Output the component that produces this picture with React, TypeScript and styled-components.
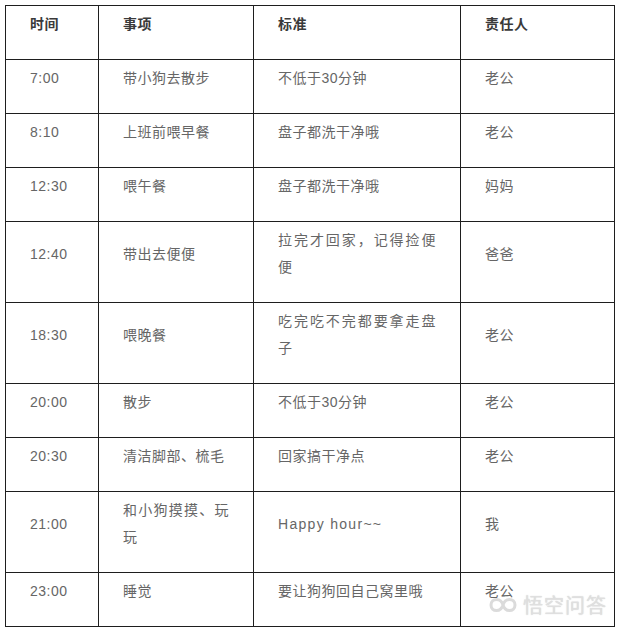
import { type FC } from 'react'
import styled, { createGlobalStyle } from 'styled-components'

interface IRow {
  time: string
  task: string
  rule: string
  owner: string
  latin?: boolean
}

const rows: IRow[] = [
  { time: '7:00', task: '带小狗去散步', rule: '不低于30分钟', owner: '老公' },
  { time: '8:10', task: '上班前喂早餐', rule: '盘子都洗干净哦', owner: '老公' },
  { time: '12:30', task: '喂午餐', rule: '盘子都洗干净哦', owner: '妈妈' },
  { time: '12:40', task: '带出去便便', rule: '拉完才回家，记得捡便便', owner: '爸爸' },
  { time: '18:30', task: '喂晚餐', rule: '吃完吃不完都要拿走盘子', owner: '老公' },
  { time: '20:00', task: '散步', rule: '不低于30分钟', owner: '老公' },
  { time: '20:30', task: '清洁脚部、梳毛', rule: '回家搞干净点', owner: '老公' },
  { time: '21:00', task: '和小狗摸摸、玩玩', rule: 'Happy hour~~', owner: '我', latin: true },
  { time: '23:00', task: '睡觉', rule: '要让狗狗回自己窝里哦', owner: '老公' },
]

const GlobalStyle = createGlobalStyle`
  html, body {
    margin: 0;
    padding: 0;
    background: #fff;
  }
`

const Page = styled.div`
  position: relative;
  width: 620px;
  height: 630px;
  padding: 5px 0 0 5px;
  box-sizing: border-box;
  font-family: 'Liberation Sans', 'Noto Sans CJK SC', sans-serif;
`

const Table = styled.table`
  border-collapse: collapse;
  table-layout: fixed;
  width: 609px;
`

const Cell = styled.td<{ $head?: boolean; $latin?: boolean }>`
  border: 1px solid #1e1e1e;
  padding: 5px 24px 21px 24px;
  line-height: 27px;
  font-size: 14px;
  letter-spacing: ${p => (p.$latin ? '1.3px' : '0.5px')};
  vertical-align: middle;
  text-align: justify;
  color: ${p => (p.$head ? '#3a3a3a' : '#666')};
  font-weight: ${p => (p.$head ? 700 : 400)};
  word-break: break-all;
`

const Watermark = styled.div`
  position: absolute;
  right: 13px;
  bottom: 11px;
  display: flex;
  align-items: center;
  gap: 6px;
  color: rgba(225, 225, 225, 0.9);
  font-size: 20px;
  letter-spacing: 1px;
  font-family: 'Noto Sans CJK SC', sans-serif;
  text-shadow: 0 0 1px rgba(170, 170, 170, 0.6);
`

const Logo: FC = () => (
  <svg width="28" height="16" viewBox="0 0 28 16" fill="none">
    <path
      d="M2 8c0-3.5 2.5-5.5 5.5-5.5S13 4.5 14 8c1 3.5 3.5 5.5 6.5 5.5S26 11.5 26 8s-2.5-5.5-5.5-5.5S15 4.5 14 8c-1 3.5-3.5 5.5-6.5 5.5S2 11.5 2 8z"
      stroke="rgba(215,215,215,0.9)"
      strokeWidth="3"
    />
  </svg>
)

const App: FC = () => (
  <Page>
    <GlobalStyle />
    <Table>
      <colgroup>
        <col style={{ width: 93 }} />
        <col style={{ width: 155 }} />
        <col style={{ width: 207 }} />
        <col style={{ width: 154 }} />
      </colgroup>
      <thead>
        <tr>
          <Cell as="th" $head>时间</Cell>
          <Cell as="th" $head>事项</Cell>
          <Cell as="th" $head>标准</Cell>
          <Cell as="th" $head>责任人</Cell>
        </tr>
      </thead>
      <tbody>
        {rows.map(row => (
          <tr key={row.time}>
            <Cell>{row.time}</Cell>
            <Cell>{row.task}</Cell>
            <Cell $latin={row.latin}>{row.rule}</Cell>
            <Cell>{row.owner}</Cell>
          </tr>
        ))}
      </tbody>
    </Table>
    <Watermark>
      <Logo />
      悟空问答
    </Watermark>
  </Page>
)

export default App
